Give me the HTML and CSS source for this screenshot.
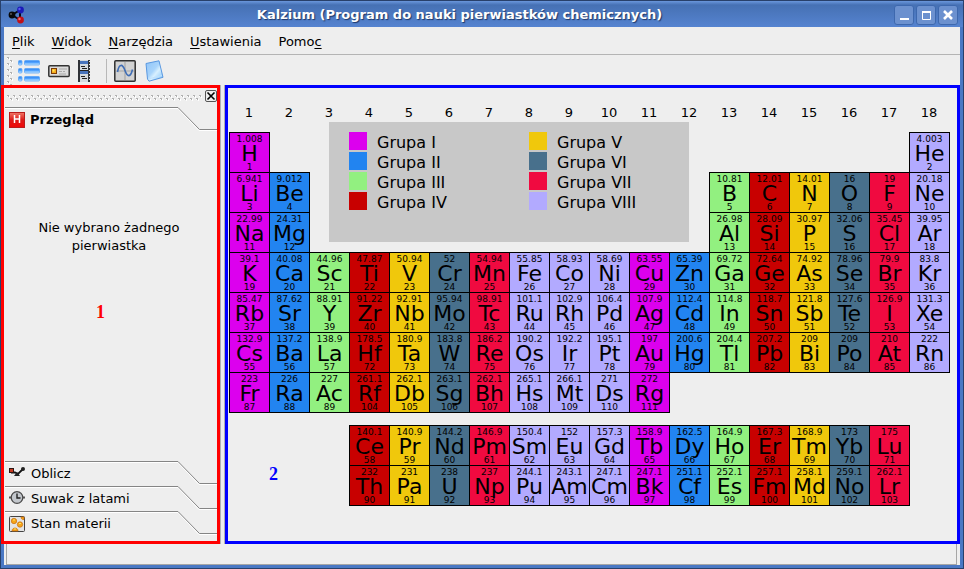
FILE: index.html
```html
<!DOCTYPE html>
<html lang="pl">
<head>
<meta charset="utf-8">
<title>Kalzium</title>
<link rel="stylesheet" href="styles.css">
</head>
<body>
<div class="window">
  <header class="titlebar">
    <svg class="app-icon" width="17" height="18" viewBox="0 0 17 18" aria-hidden="true">
      <path d="M4 9 12 4M4 9l8 5M12 4v10" stroke="#0a0a14" stroke-width="2"/>
      <circle cx="4" cy="9" r="3.4" fill="#080808"/><circle cx="3" cy="8" r="1" fill="#555"/>
      <circle cx="12.500" cy="4" r="3.400" fill="#1a1ab8"/><circle cx="11.500" cy="3" r="1.200" fill="#5a5af0"/>
      <circle cx="12.500" cy="14" r="3.400" fill="#c01018"/><circle cx="11.500" cy="13" r="1.200" fill="#f07070"/>
    </svg>
    <h1 class="title">Kalzium (Program do nauki pierwiastków chemicznych)</h1>
    <div class="window-buttons">
      <button class="window-button" aria-label="Minimalizuj"><svg width="18" height="18" viewBox="0 0 18 18"><path d="M5 13h9" stroke="#fff" stroke-width="2"/></svg></button>
      <button class="window-button" aria-label="Maksymalizuj"><svg width="18" height="18" viewBox="0 0 18 18"><path d="M5.500 5.500h8v8h-8z" fill="none" stroke="#fff"/><path d="M5 6h9" stroke="#fff" stroke-width="2"/></svg></button>
      <button class="window-button" aria-label="Zamknij"><svg width="18" height="18" viewBox="0 0 18 18"><path d="m5 5 8 8M13 5l-8 8" stroke="#fff" stroke-width="2.600"/></svg></button>
    </div>
  </header>

  <nav class="menubar">
    <button class="menu"><u>P</u>lik</button>
    <button class="menu"><u>W</u>idok</button>
    <button class="menu"><u>N</u>arzędzia</button>
    <button class="menu"><u>U</u>stawienia</button>
    <button class="menu">Pomo<u>c</u></button>
  </nav>

  <div class="toolbar">
    <svg class="toolbar-grip" width="6" height="28" aria-hidden="true">
      <defs><pattern id="grip-v" width="6" height="6" patternUnits="userSpaceOnUse"><path d="M0 0h2v1H0zM1 1h1v1H1zM3 3h2v1H3zM4 4h1v1H4z" fill="#b0b0b0"/><path d="M0 1h1v1H0zM2 1h1v2H2zM3 4h1v1H3zM5 4h1v2H5z" fill="#fff"/></pattern></defs>
      <rect width="6" height="28" fill="url(#grip-v)"/>
    </svg>
    <button class="tool" aria-label="Legenda">
      <svg width="22" height="22" viewBox="0 0 22 22">
        <defs><linearGradient id="bar" x2="0" y2="1"><stop offset="0" stop-color="#2f80ec"/><stop offset=".45" stop-color="#4fa2ff"/><stop offset="1" stop-color="#d4eeff"/></linearGradient></defs>
        <g fill="url(#bar)" stroke="#5aa6f8" stroke-width=".8">
          <rect x=".5" y=".5" width="3.500" height="4.500" rx="1"/><rect x="6.500" y=".5" width="15" height="4.500" rx="1"/>
          <rect x=".5" y="8.500" width="3.500" height="4.500" rx="1"/><rect x="6.500" y="8.500" width="15" height="4.500" rx="1"/>
          <rect x=".5" y="16.500" width="3.500" height="4.500" rx="1"/><rect x="6.500" y="16.500" width="15" height="4.500" rx="1"/>
        </g>
      </svg>
    </button>
    <button class="tool" aria-label="Informacje">
      <svg width="22" height="22" viewBox="0 0 22 22">
        <rect x=".8" y="5.800" width="20.400" height="10.600" rx="1" fill="#dcdcdc" stroke="#333" stroke-width="1.500"/>
        <rect x="3.500" y="8.500" width="5" height="5" fill="#f5a81c" stroke="#7a3c08"/><path d="M4.500 9.500h2v2h-2z" fill="#ffe95a"/>
        <path d="M11 9h8M11 11.500h3M15 11.500h2M11 14h7" stroke="#aaa"/>
      </svg>
    </button>
    <button class="tool" aria-label="Tabele">
      <svg width="22" height="22" viewBox="0 0 22 22">
        <path d="M0 0h2v22H0zM10 0h2v22h-2z" fill="#303338"/><path d="M2 0h8v22H2z" fill="#d5dbe0"/>
        <path d="M2 1h8v3H2zM2 11h8v3H2z" fill="#4774bd"/><path d="M2 10h8v1H2zM3 6h4v1H3zM4 8h5v1H4zM3 16h4v1H3zM4 18h5v1H4z" fill="#222"/>
        <path d="M11.500 1v21" stroke="#e5e5e5" stroke-dasharray="1 2"/>
      </svg>
    </button>
    <span class="tool-separator"></span>
    <button class="tool" aria-label="Wykres">
      <svg width="22" height="22" viewBox="0 0 22 22">
        <rect x=".8" y=".8" width="20.400" height="20.400" rx="1" fill="#d2d2d2" stroke="#303030" stroke-width="1.500"/>
        <path d="M11 2v18M2 11h18" stroke="#a8a8a8" stroke-width="1.200"/>
        <path d="M3.500 12C5 3.500 8.500 3.500 11 10.500s5.500 7 7.500-1" fill="none" stroke="#3f6db5" stroke-width="1.600"/>
      </svg>
    </button>
    <button class="tool" aria-label="Słowniczek">
      <svg width="22" height="22" viewBox="0 0 22 22">
        <defs><linearGradient id="note" x2="1" y2="1"><stop offset="0" stop-color="#8fc4f8"/><stop offset=".45" stop-color="#a8d4fb"/><stop offset=".6" stop-color="#d8f0ff"/><stop offset="1" stop-color="#76bcf8"/></linearGradient></defs>
        <path d="M2 3.500 15 .8l4 16.500L5 21.200 3.500 19z" fill="url(#note)" stroke="#5a98e0"/><path d="m4 19 14-3.500" stroke="#bfe2ff"/>
      </svg>
    </button>
  </div>

  <main class="workspace">
    <aside class="sidebar">
      <div class="dock-handle">
        <svg class="dock-grip" width="100%" height="6" aria-hidden="true">
          <defs><pattern id="grip-h" width="6" height="6" patternUnits="userSpaceOnUse"><path d="M0 0h2v1H0zM1 1h1v1H1zM3 3h2v1H3zM4 4h1v1H4z" fill="#b0b0b0"/><path d="M0 1h1v1H0zM2 1h1v2H2zM3 4h1v1H3zM5 4h1v2H5z" fill="#fff"/></pattern></defs>
          <rect width="100%" height="6" fill="url(#grip-h)"/>
        </svg>
        <button class="dock-close" aria-label="Zamknij panel"><svg width="10" height="10" viewBox="0 0 10 10"><path d="m1.500 1.500 7 7M8.500 1.500l-7 7" stroke="#000" stroke-width="1.600"/></svg></button>
      </div>
      <button class="tab tab-active">
        <span class="tab-label">
          <svg width="16" height="16" viewBox="0 0 16 16"><defs><linearGradient id="red" x2="0" y2="1"><stop offset="0" stop-color="#f07868"/><stop offset=".5" stop-color="#dd1a18"/><stop offset="1" stop-color="#f00808"/></linearGradient></defs><rect x=".5" y=".5" width="15" height="15" fill="url(#red)" stroke="#b81c1c"/><path d="M5.500 3v8M10.500 3v8M5 7h6" stroke="#fff" stroke-width="1.500"/></svg>
          Przegląd
        </span>
        <svg class="tab-edge" width="39" height="24" viewBox="0 0 39 24"><path d="M0 1.500 21 23.500H39" fill="none" stroke="#fff"/><path d="M0 .5 21.500 22.500H39" fill="none" stroke="#858585"/></svg>
      </button>
      <p class="message">Nie wybrano żadnego pierwiastka</p>
      <button class="tab">
        <span class="tab-label">
          <svg width="16" height="16" viewBox="0 0 16 16"><path d="M2 6.500h4l3 1.500 5-5" fill="none" stroke="#111" stroke-width="1.800"/><path d="M0 2h5v5H0z" fill="#2b1714"/><path d="M1 3h3v3H1z" fill="#c43a20"/><circle cx="14" cy="3" r="2" fill="#222"/><path d="m8 6 3 4H5z" fill="#222"/></svg>
          Oblicz
        </span>
        <svg class="tab-edge" width="39" height="24" viewBox="0 0 39 24"><path d="M0 1.500 21 23.500H39" fill="none" stroke="#fff"/><path d="M0 .5 21.500 22.500H39" fill="none" stroke="#858585"/></svg>
      </button>
      <button class="tab">
        <span class="tab-label">
          <svg width="16" height="16" viewBox="0 0 16 16"><path d="M0 6.500h16" stroke="#555" stroke-width="2"/><circle cx="8" cy="6.500" r="5.800" fill="#c3c7cc" stroke="#4a4a4a" stroke-width="1.300"/><path d="M8 2.500V7h3.500" fill="none" stroke="#222" stroke-width="1.400"/></svg>
          Suwak z latami
        </span>
        <svg class="tab-edge" width="39" height="24" viewBox="0 0 39 24"><path d="M0 1.500 21 23.500H39" fill="none" stroke="#fff"/><path d="M0 .5 21.500 22.500H39" fill="none" stroke="#858585"/></svg>
      </button>
      <button class="tab">
        <span class="tab-label">
          <svg width="16" height="16" viewBox="0 0 16 16"><rect x=".5" y=".5" width="15" height="15" rx="1" fill="#e4e4e4" stroke="#444"/><g fill="#f5a418" stroke="#c96e10" stroke-width=".7"><circle cx="5" cy="5" r="2.700"/><circle cx="11" cy="8.500" r="2.700"/><path d="M3 15c0-4 6-4 6 0zM12 1h3v2.500c-2 .5-3-1-3-2.500z"/></g><path d="M4 4h2M10 7.500h2M5 13h2" stroke="#ffe45c"/></svg>
          Stan materii
        </span>
        <svg class="tab-edge" width="39" height="24" viewBox="0 0 39 24"><path d="M0 1.500 21 23.500H39" fill="none" stroke="#fff"/><path d="M0 .5 21.500 22.500H39" fill="none" stroke="#858585"/></svg>
      </button>
      <span class="marker marker-red">1</span>
    </aside>

    <div class="splitter"></div>

    <section class="chart">
      <table class="periodic" id="periodic">
        <thead></thead>
        <tbody></tbody>
      </table>
      <ul class="legend">
        <li><span class="swatch g1"></span>Grupa I</li>
        <li><span class="swatch g2"></span>Grupa II</li>
        <li><span class="swatch g3"></span>Grupa III</li>
        <li><span class="swatch g4"></span>Grupa IV</li>
        <li><span class="swatch g5"></span>Grupa V</li>
        <li><span class="swatch g6"></span>Grupa VI</li>
        <li><span class="swatch g7"></span>Grupa VII</li>
        <li><span class="swatch g8"></span>Grupa VIII</li>
      </ul>
      <span class="marker marker-blue">2</span>
    </section>
  </main>

  <footer class="statusbar"></footer>
</div>
<script src="table.js"></script>
</body>
</html>
```
FILE: styles.css
```css
* {
  box-sizing: border-box;
}

body {
  margin: 0;
  font-family: "DejaVu Sans", sans-serif;
  font-size: 13px;
  color: #000;
  background: #28406a;
}

button {
  margin: 0;
  padding: 0;
  border: 0;
  background: none;
  font: inherit;
  color: inherit;
}

svg {
  display: block;
  flex: none;
}

.window {
  display: flex;
  flex-direction: column;
  min-height: 100vh;
  padding: 0 3px 3px;
  border: 1px solid #28406a;
  border-top-width: 0;
  border-radius: 4px 4px 0 0;
  background: #4a78c4;
}

/* Title bar */
.titlebar {
  display: flex;
  align-items: center;
  height: 27px;
  margin: 0 -3px;
  padding: 2px 5px 0 7px;
  border-top: 1px solid #28406a;
  background: linear-gradient(#6a97dc 0, #4671b4 4px, #5583d0 100%);
}

.title {
  flex: 1;
  margin: 0;
  font-size: 13px;
  line-height: 26px;
  text-align: center;
  color: #fff;
  text-shadow: 1px 1px 1px #1c3768;
}

.window-buttons {
  display: flex;
  gap: 2px;
}

.window-button {
  width: 20px;
  height: 20px;
  border: 1px solid #3d68ae;
  border-radius: 3px;
  background: #6c91cf;
}

/* Menu and toolbar */
.menubar {
  display: flex;
  gap: 1px;
  height: 28px;
  padding-top: 2px;
  border-bottom: 1px solid #b4b4b4;
  background: #eee;
}

.menu {
  padding: 0 8px;
}

.menu u {
  text-underline-offset: 2px;
}

.toolbar {
  display: flex;
  align-items: center;
  gap: 8px;
  height: 30px;
  padding: 2px 0 0 3px;
  background: #eee;
}

.toolbar-grip {
  margin-right: -3px;
}

.tool {
  width: 22px;
  height: 22px;
}

.tool-separator {
  width: 1px;
  height: 24px;
  margin: 0 -1px 0 -2px;
  background: #b8b8b8;
}

/* Work area */
.workspace {
  display: flex;
  flex: 1;
  background: #eee;
}

.sidebar {
  position: relative;
  display: flex;
  flex: none;
  flex-direction: column;
  width: 219px;
  margin-left: -3px;
  padding: 0 0 5px 1px;
  border: 3px solid #f00;
  background: #eee;
}

.dock-handle {
  display: flex;
  align-items: center;
  gap: 3px;
  height: 19px;
  padding-left: 2px;
}

.dock-grip {
  flex: 1;
  min-width: 0;
}

.dock-close {
  display: flex;
  align-items: center;
  justify-content: center;
  width: 12px;
  height: 12px;
  margin-bottom: 3px;
  border: 1px solid #555;
  border-radius: 2px;
}

.tab {
  display: flex;
  height: 25px;
  text-align: left;
}

.tab-label {
  display: flex;
  flex: 1;
  align-items: center;
  gap: 6px;
  height: 24px;
  padding-left: 4px;
  border-top: 1px solid #858585;
  box-shadow: inset 0 1px #fff;
}

.tab-active {
  font-weight: bold;
}

.tab-active .tab-label {
  gap: 5px;
}

.message {
  flex: 1;
  margin: 0;
  padding: 87px 34px 0 30px;
  line-height: 18px;
  text-align: center;
}

.splitter {
  width: 5px;
  border: solid #b0b0b0;
  border-width: 0 1px;
  background: #eee;
}

.chart {
  position: relative;
  flex: 1;
  padding-left: 1px;
  border: 3px solid #00f;
}

.marker {
  position: absolute;
  font: bold 18px/20px "Liberation Serif", serif;
}

.marker-red {
  top: 214px;
  left: 92px;
  color: #f00;
}

.marker-blue {
  top: 376px;
  left: 41px;
  color: #00f;
}

/* Periodic table */
.periodic {
  width: 720px;
  table-layout: fixed;
  border-spacing: 0;
}

.periodic th {
  height: 44px;
  padding: 5px 0 0;
  font-weight: normal;
}

.periodic td {
  height: 40px;
  padding: 0;
}

.periodic .gap td {
  height: 13px;
}

.element {
  display: grid;
  grid-template-rows: 11px 17px 10px;
  width: 41px;
  height: 41px;
  margin: 0 -1px -1px 0;
  padding-top: 1px;
  border: 1px solid #000;
  text-align: center;
}

.mass,
.number {
  font-size: 9px;
  line-height: 11px;
}

.symbol {
  font-size: 22px;
  line-height: 18px;
}

.legend {
  position: absolute;
  top: 34px;
  left: 101px;
  display: grid;
  grid-template-rows: repeat(4, 20px);
  grid-auto-columns: 180px;
  grid-auto-flow: column;
  width: 360px;
  height: 120px;
  margin: 0;
  padding: 10px 0 0 20px;
  list-style: none;
  font-size: 16px;
  background: #c8c8c8;
}

.legend li {
  display: flex;
  gap: 10px;
  line-height: 22px;
}

.swatch {
  width: 18px;
  height: 18px;
}

.g1 { background: #dc00ee; }
.g2 { background: #2284f0; }
.g3 { background: #92f080; }
.g4 { background: #c80000; }
.g5 { background: #f0c80c; }
.g6 { background: #48708c; }
.g7 { background: #f00a40; }
.g8 { background: #b2aaff; }

.statusbar {
  height: 21px;
  padding: 0 3px 1px 2px;
  background: #eee;
}

.statusbar::before {
  content: "";
  display: block;
  height: 20px;
  border: 1px solid #a6a6a6;
  border-top: 0;
}
```
FILE: table.js
```js
// Each row: [first column, first atomic number, "Symbol mass ..."] segments.
const rows = [
  [[1, 1, "H 1.008"], [18, 2, "He 4.003"]],
  [[1, 3, "Li 6.941 Be 9.012"], [13, 5, "B 10.81 C 12.01 N 14.01 O 16 F 19 Ne 20.18"]],
  [[1, 11, "Na 22.99 Mg 24.31"], [13, 13, "Al 26.98 Si 28.09 P 30.97 S 32.06 Cl 35.45 Ar 39.95"]],
  [[1, 19, "K 39.1 Ca 40.08 Sc 44.96 Ti 47.87 V 50.94 Cr 52 Mn 54.94 Fe 55.85 Co 58.93 Ni 58.69 Cu 63.55 Zn 65.39 Ga 69.72 Ge 72.64 As 74.92 Se 78.96 Br 79.9 Kr 83.8"]],
  [[1, 37, "Rb 85.47 Sr 87.62 Y 88.91 Zr 91.22 Nb 92.91 Mo 95.94 Tc 98.91 Ru 101.1 Rh 102.9 Pd 106.4 Ag 107.9 Cd 112.4 In 114.8 Sn 118.7 Sb 121.8 Te 127.6 I 126.9 Xe 131.3"]],
  [[1, 55, "Cs 132.9 Ba 137.2 La 138.9"], [4, 72, "Hf 178.5 Ta 180.9 W 183.8 Re 186.2 Os 190.2 Ir 192.2 Pt 195.1 Au 197 Hg 200.6 Tl 204.4 Pb 207.2 Bi 209 Po 209 At 210 Rn 222"]],
  [[1, 87, "Fr 223 Ra 226 Ac 227"], [4, 104, "Rf 261.1 Db 262.1 Sg 263.1 Bh 262.1 Hs 265.1 Mt 266.1 Ds 271 Rg 272"]],
  [],
  [[4, 58, "Ce 140.1 Pr 140.9 Nd 144.2 Pm 146.9 Sm 150.4 Eu 152 Gd 157.3 Tb 158.9 Dy 162.5 Ho 164.9 Er 167.3 Tm 168.9 Yb 173 Lu 175"]],
  [[4, 90, "Th 232 Pa 231 U 238 Np 237 Pu 244.1 Am 243.1 Cm 247.1 Bk 247.1 Cf 251.1 Es 252.1 Fm 257.1 Md 258.1 No 259.1 Lr 262.1"]]
];

// Colour group of each of the 18 columns.
const groups = [1, 2, 3, 4, 5, 6, 7, 8, 8, 8, 1, 2, 3, 4, 5, 6, 7, 8];
const table = document.getElementById("periodic");

table.tHead.innerHTML = "<tr>" + groups.map((g, i) => `<th scope="col">${i + 1}</th>`).join("") + "</tr>";

table.tBodies[0].innerHTML = rows.map(segments => {
  const cells = Array(18).fill("<td></td>");
  for (const [column, first, text] of segments) {
    const parts = text.split(" ");
    for (let i = 0; i < parts.length / 2; i++) {
      const index = column - 1 + i;
      cells[index] = `<td><div class="element g${groups[index]}"><span class="mass">${parts[2 * i + 1]}</span><span class="symbol">${parts[2 * i]}</span><span class="number">${first + i}</span></div></td>`;
    }
  }
  return `<tr${segments.length ? "" : ' class="gap"'}>${cells.join("")}</tr>`;
}).join("");
```
